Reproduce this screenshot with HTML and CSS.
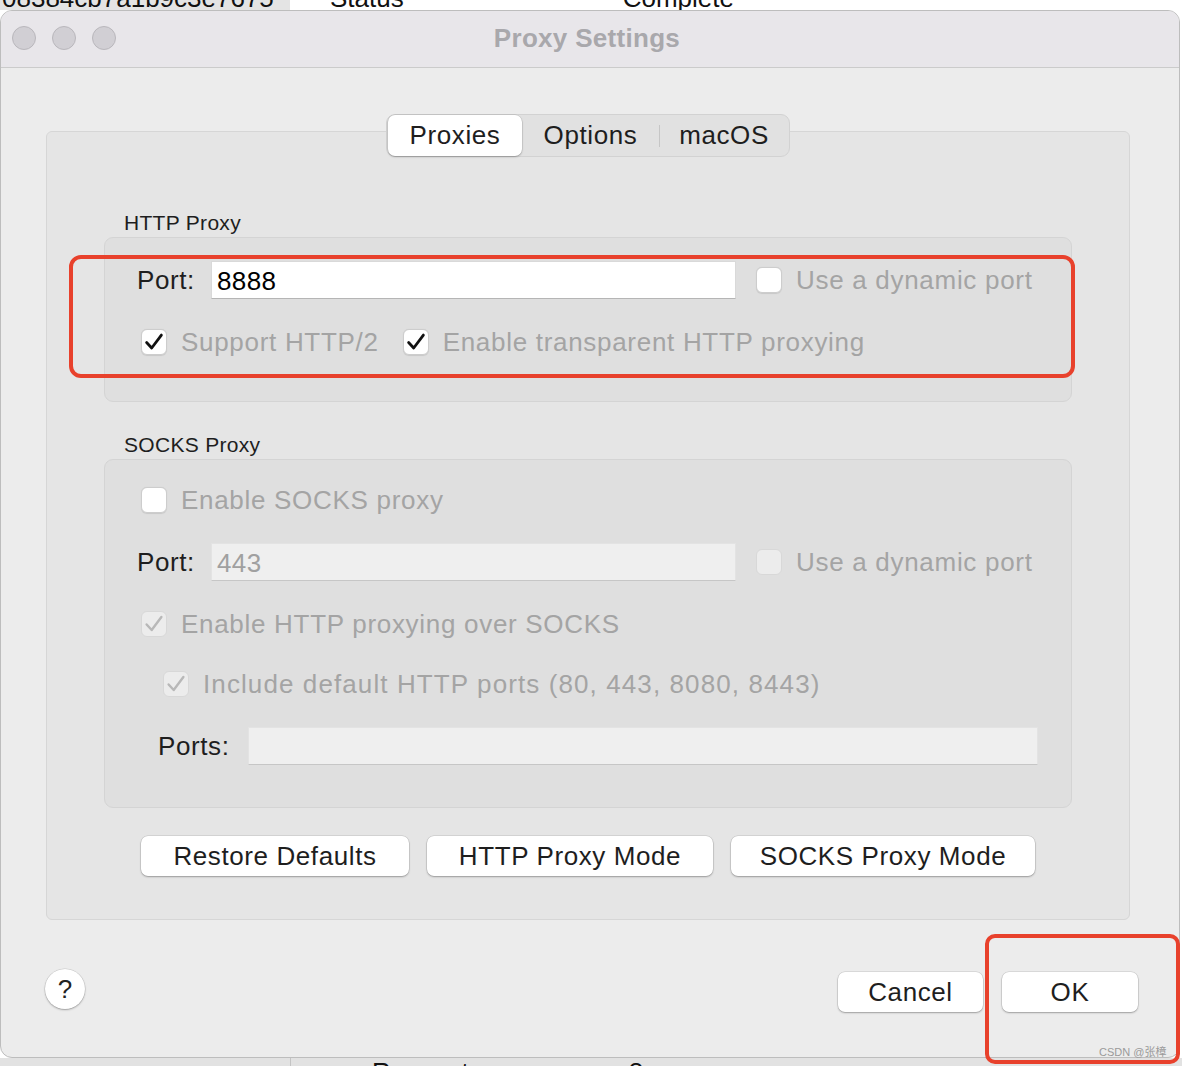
FILE: index.html
```html
<!DOCTYPE html>
<html lang="en">
<head>
    <meta charset="UTF-8">
    <title>Proxy Settings</title>
    <link rel="stylesheet" href="styles.css">
</head>
<body>
<div class="screen">
    <!-- what is behind the sheet -->
    <div class="backdrop-top">
        <span class="cell-hash"><span>08384cb7a1b9c3e7675</span></span>
        <span class="cell-status">Status</span>
        <span class="cell-complete">Complete</span>
    </div>

    <div class="window">
        <div class="titlebar">
            <div class="lights"><span></span><span></span><span></span></div>
            <div class="title">Proxy Settings</div>
        </div>

        <div class="content">
            <div class="panel">
                <div class="tabs">
                    <div class="tab selected">Proxies</div>
                    <div class="tab">Options</div>
                    <div class="tab-sep"></div>
                    <div class="tab">macOS</div>
                </div>

                <!-- HTTP -->
                <div class="group-label">HTTP Proxy</div>
                <div class="group group-http">
                    <div class="row">
                        <span class="field-label">Port:</span>
                        <div class="input">8888</div>
                        <span class="check check-after"></span>
                        <span class="opt">Use a dynamic port</span>
                    </div>
                    <div class="row row-gap">
                        <span class="check on indent"><svg viewBox="0 0 26 26"><path d="M5 13.5l5.5 6 10.5-14"/></svg></span>
                        <span class="opt">Support HTTP/2</span>
                        <span class="check on next"><svg viewBox="0 0 26 26"><path d="M5 13.5l5.5 6 10.5-14"/></svg></span>
                        <span class="opt">Enable transparent HTTP proxying</span>
                    </div>
                </div>

                <!-- SOCKS -->
                <div class="group-label label-socks">SOCKS Proxy</div>
                <div class="group group-socks">
                    <div class="row">
                        <span class="check indent"></span>
                        <span class="opt">Enable SOCKS proxy</span>
                    </div>
                    <div class="row row-gap">
                        <span class="field-label">Port:</span>
                        <div class="input off">443</div>
                        <span class="check dim check-after"></span>
                        <span class="opt">Use a dynamic port</span>
                    </div>
                    <div class="row row-gap">
                        <span class="check dim on indent"><svg viewBox="0 0 26 26"><path d="M5 13.5l5.5 6 10.5-14"/></svg></span>
                        <span class="opt">Enable HTTP proxying over SOCKS</span>
                    </div>
                    <div class="row row-gap-sm">
                        <span class="check dim on indent-2"><svg viewBox="0 0 26 26"><path d="M5 13.5l5.5 6 10.5-14"/></svg></span>
                        <span class="opt opt-wide">Include default HTTP ports (80, 443, 8080, 8443)</span>
                    </div>
                    <div class="row row-gap">
                        <span class="field-label ports-label">Ports:</span>
                        <div class="input off wide"></div>
                    </div>
                </div>

                <div class="mode-buttons">
                    <button class="btn btn-restore">Restore Defaults</button>
                    <button class="btn btn-http">HTTP Proxy Mode</button>
                    <button class="btn btn-socks">SOCKS Proxy Mode</button>
                </div>
            </div>

            <div class="footer">
                <button class="help">?</button>
                <div class="footer-actions">
                    <button class="btn btn-cancel">Cancel</button>
                    <button class="btn btn-ok">OK</button>
                </div>
            </div>
        </div>
    </div>

    <div class="backdrop-bottom">
        <span class="cell-left"></span>
        <span class="cell-request">Request</span>
        <span class="cell-time">8 ms</span>
    </div>

    <!-- annotations drawn over the screenshot -->
    <div class="mark mark-http"></div>
    <div class="mark mark-ok"></div>
    <div class="watermark">CSDN @张樟</div>
</div>
</body>
</html>
```

FILE: styles.css
```css
body {
    margin: 0;
    background: #ffffff;
    font-family: 'Liberation Sans', Arial, sans-serif;
    color: #1e1e1e;
}

.screen {
    position: relative;
    width: 1182px;
    height: 1066px;
    overflow: hidden;
}

/* ---- backdrop ---- */
.backdrop-top {
    display: flex;
    height: 10px;
    overflow: hidden;
    font-size: 26px;
    line-height: 26px;
    color: #111;
}

.cell-hash {
    width: 290px;
    background: #e4e4e4;
}

.cell-hash span,
.cell-status,
.cell-complete {
    display: block;
    margin-top: -15px;
    white-space: nowrap;
}

.cell-hash span {
    margin-left: 2px;
}

.cell-status {
    margin-left: 40px;
}

.cell-complete {
    margin-left: 219px;
}

.backdrop-bottom {
    display: flex;
    height: 8px;
    overflow: hidden;
    background: #e2e2e2;
    font-size: 26px;
    line-height: 26px;
    color: #111;
}

.cell-left {
    width: 290px;
    border-right: 1px solid #c4c4c4;
}

.cell-request {
    margin-left: 81px;
    margin-top: 1px;
}

.cell-time {
    margin-left: 160px;
    margin-top: 1px;
}

/* ---- window ---- */
.window {
    width: 1180px;
    height: 1048px;
    box-sizing: border-box;
    border: 1px solid #bdbdbd;
    border-radius: 12px;
    background: #ececec;
    overflow: hidden;
    display: flex;
    flex-direction: column;
}

.titlebar {
    position: relative;
    height: 56px;
    flex-shrink: 0;
    background: #e8e6ea;
    border-bottom: 1px solid #cbcbcb;
    display: flex;
    align-items: center;
    justify-content: center;
}

.lights {
    position: absolute;
    left: 11px;
    top: 15px;
    display: flex;
    gap: 16px;
}

.lights span {
    width: 24px;
    height: 24px;
    box-sizing: border-box;
    border-radius: 50%;
    background: #d1cfd4;
    border: 1px solid #b9b7bc;
}

.title {
    font-size: 26px;
    font-weight: bold;
    color: #a9a8ac;
    letter-spacing: 0.3px;
    margin: 0 6px 2px 0;
}

.content {
    flex: 1;
    display: flex;
    flex-direction: column;
}

.panel {
    width: 1084px;
    box-sizing: border-box;
    margin: 63px 0 0 45px;
    padding: 0 57px 43px;
    background: #e5e5e5;
    border: 1px solid #d6d6d6;
    border-radius: 6px;
    font-size: 26px;
    letter-spacing: 0.6px;
}

/* segmented control */
.tabs {
    display: flex;
    align-items: center;
    width: fit-content;
    height: 43px;
    box-sizing: border-box;
    margin: -18px 0 0 282px;
    padding: 0 1px;
    background: #e1e1e1;
    border: 1px solid #d2d2d2;
    border-radius: 9px;
}

.tab {
    height: 41px;
    line-height: 41px;
    text-align: center;
    color: #1e1e1e;
}

.tab:nth-child(1) { width: 134px; }
.tab:nth-child(2) { width: 137px; }
.tab:nth-child(4) { width: 128px; }

.tab.selected {
    background: #ffffff;
    border-radius: 7px;
    box-shadow: 0 0 0 0.5px rgba(0, 0, 0, 0.12), 0 1px 2px rgba(0, 0, 0, 0.25);
}

.tab-sep {
    width: 1px;
    height: 22px;
    background: #c6c6c6;
}

/* groups */
.group-label {
    margin: 53px 0 1px 20px;
    font-size: 21px;
    line-height: 26px;
    letter-spacing: 0.3px;
    color: #1e1e1e;
}

.label-socks {
    margin-top: 30px;
}

.group {
    background: #dfdfdf;
    border: 1px solid #d4d4d4;
    border-radius: 9px;
    padding-left: 32px;
}

.group-http {
    padding-top: 23px;
    padding-bottom: 40px;
}

.group-socks {
    padding-top: 21px;
    padding-bottom: 42px;
}

.row {
    display: flex;
    align-items: center;
    height: 38px;
}

.row-gap {
    margin-top: 24px;
}

.row-gap-sm {
    margin-top: 22px;
}

.field-label {
    width: 74px;
    flex-shrink: 0;
    color: #1e1e1e;
}

.ports-label {
    width: 90px;
    margin-left: 21px;
}

.input {
    width: 525px;
    height: 38px;
    box-sizing: border-box;
    padding-left: 5px;
    line-height: 38px;
    background: #ffffff;
    border: 1px solid #d9d9d9;
    border-bottom-color: #b5b5b5;
    color: #000;
    letter-spacing: 0.4px;
}

.input.off {
    background: #efefef;
    border-color: #e3e3e3;
    border-bottom-color: #c6c6c6;
    color: #a0a0a0;
}

.input.wide {
    width: 790px;
}

.opt {
    color: #a4a4a4;
    white-space: nowrap;
    letter-spacing: 0.7px;
}

.opt-wide {
    letter-spacing: 1.1px;
}

/* checkboxes */
.check {
    width: 26px;
    height: 26px;
    flex-shrink: 0;
    box-sizing: border-box;
    display: flex;
    align-items: center;
    justify-content: center;
    background: #ffffff;
    border: 1px solid #cdcdcd;
    border-radius: 6px;
    box-shadow: 0 0.5px 1px rgba(0, 0, 0, 0.1);
    margin-right: 14px;
}

.check svg {
    width: 24px;
    height: 24px;
}

.check path {
    fill: none;
    stroke: #111;
    stroke-width: 3;
    stroke-linecap: round;
    stroke-linejoin: round;
}

.check.dim {
    background: #ececec;
    border-color: #d8d8d8;
    box-shadow: none;
}

.check.dim path {
    stroke: #b8b8b8;
    stroke-width: 2.6;
}

.check-after {
    margin-left: 20px;
}

.indent {
    margin-left: 4px;
}

.indent-2 {
    margin-left: 26px;
}

.next {
    margin-left: 24px;
}

/* buttons */
.btn {
    height: 40px;
    box-sizing: border-box;
    padding: 0;
    border: none;
    border-radius: 7px;
    background: #ffffff;
    font-family: inherit;
    font-size: 26px;
    letter-spacing: 0.6px;
    color: #1e1e1e;
    box-shadow: 0 0 0 0.5px rgba(0, 0, 0, 0.14), 0 1px 2px rgba(0, 0, 0, 0.28);
    cursor: pointer;
}

.mode-buttons {
    display: flex;
    justify-content: center;
    gap: 18px;
    margin-top: 28px;
}

.btn-restore { width: 268px; }
.btn-http { width: 286px; }
.btn-socks { width: 304px; }

.footer {
    display: flex;
    align-items: center;
    justify-content: space-between;
    margin-top: 52px;
    padding: 0 41px 0 44px;
}

.help {
    width: 40px;
    height: 40px;
    margin-top: -6px;
    padding: 0;
    border: none;
    border-radius: 50%;
    background: #ffffff;
    font-family: inherit;
    font-size: 26px;
    color: #222;
    box-shadow: 0 0 0 0.5px rgba(0, 0, 0, 0.14), 0 1px 2px rgba(0, 0, 0, 0.28);
}

.footer-actions {
    display: flex;
    gap: 19px;
}

.btn-cancel { width: 145px; }
.btn-ok { width: 136px; }

/* annotations */
.mark {
    position: absolute;
    box-sizing: border-box;
    border: 4px solid #e8412c;
    border-radius: 12px;
}

.mark-http {
    left: 69px;
    top: 255px;
    width: 1006px;
    height: 123px;
}

.mark-ok {
    left: 985px;
    top: 934px;
    width: 195px;
    height: 130px;
    border-radius: 10px;
}

.watermark {
    position: absolute;
    left: 1099px;
    top: 1043px;
    font-family: 'Liberation Sans', 'Noto Sans CJK SC', sans-serif;
    font-size: 11px;
    color: #9a9a9a;
}
```
